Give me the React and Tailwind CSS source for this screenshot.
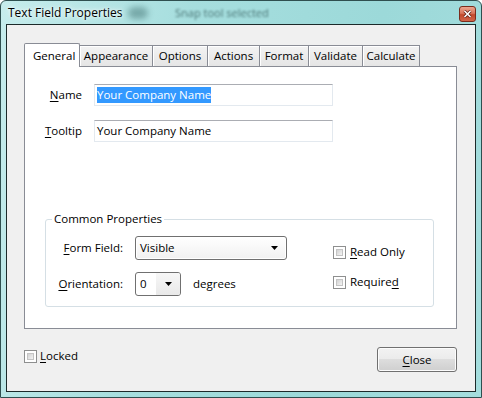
import React from "react";

const Key = ({ children }) => (
  <span className="underline underline-offset-[2px] decoration-1">{children}</span>
);

const CheckBox = () => (
  <span className="w-[13px] h-[13px] border border-[#8e8f8f] bg-white p-[2px] shrink-0 flex">
    <span className="flex-1 border border-[#c4c4c4] bg-[linear-gradient(135deg,#d2d2d2,#f4f4f4)]" />
  </span>
);

const Arrow = () => (
  <svg width="7" height="4" viewBox="0 0 7 4" className="shrink-0">
    <path d="M0 0h7L3.5 4z" fill="#000" />
  </svg>
);

const tabs = [
  { label: "Appearance", w: "w-[73px]" },
  { label: "Options", w: "w-[55px]" },
  { label: "Actions", w: "w-[52px]" },
  { label: "Format", w: "w-[49px]" },
  { label: "Validate", w: "w-[54px]" },
  { label: "Calculate", w: "w-[57px]" },
];

export default function App() {
  return (
    <div className="w-[482px] h-[398px] flex flex-col border border-[#2f4f4f] rounded-t-[6px] overflow-hidden bg-[linear-gradient(100deg,#c6ecec_0%,#a6dede_35%,#9cd9d9_70%,#a4dddd_100%)] font-['Open_Sans',sans-serif] text-[11.5px] text-black">
      {/* title bar */}
      <div className="h-[23px] flex items-center pl-[7px] pr-[5px] relative">
        <span className="text-[12px] [text-shadow:0_0_6px_#fff,0_0_3px_#fff]">Text Field Properties</span>
        <span className="absolute left-[127px] top-[6px] w-[20px] h-[12px] rounded-full bg-[#3f7070] opacity-50 blur-[3px]" />
        <span className="absolute left-[174px] top-[4px] text-[11px] text-[#244848] opacity-70 blur-[1.2px]">Snap tool selected</span>
        <div className="ml-auto mt-[5px] self-start w-[17px] h-[16px] rounded-[3px] border border-[#7a2c1c] bg-[linear-gradient(180deg,#eba68f_0%,#d9765c_45%,#c24a2c_55%,#d2654a_100%)] flex items-center justify-center">
          <svg width="9" height="8" viewBox="0 0 9 8">
            <path d="M1.5 1l6 6M7.5 1l-6 6" stroke="#5a1a10" strokeWidth="3" />
            <path d="M1.5 1l6 6M7.5 1l-6 6" stroke="#fff" strokeWidth="1.6" />
          </svg>
        </div>
      </div>

      {/* client area */}
      <div className="flex-1 mx-[5px] mb-[5px] border border-[#1c2a2a] bg-[#f0f0f0] flex flex-col pt-[18px] pl-[17px]">
        {/* tabs */}
        <div className="flex items-end h-[23px] relative z-10">
          <div className="w-[56px] h-[24px] -mb-px bg-white border border-b-0 border-[#898c95] rounded-t-[2px] pl-[8px] pt-[3px]">
            General
          </div>
          {tabs.map((t) => (
            <div
              key={t.label}
              className={`${t.w} h-[21px] border-t border-r border-[#898c95] bg-[linear-gradient(180deg,#f3f3f3,#e5e5e5)] shadow-[inset_1px_1px_0_#fff] flex items-center justify-center`}
            >
              {t.label}
            </div>
          ))}
        </div>

        {/* panel */}
        <div className="w-[433px] h-[263px] border border-[#898c95] bg-white flex flex-col pt-[17px]">
          <div className="flex flex-col gap-[14px]">
            <div className="flex items-center">
              <span className="w-[57px] text-right">
                <Key>N</Key>ame
              </span>
              <div className="ml-[12px] w-[239px] h-[22px] border border-[#e3e9ef] border-t-[#abadb3] bg-white flex items-center pl-[2px]">
                <span className="bg-[#3399ff] text-white leading-[16px]">Your Company Name</span>
              </div>
            </div>
            <div className="flex items-center">
              <span className="w-[57px] text-right">
                <Key>T</Key>ooltip
              </span>
              <div className="ml-[12px] w-[239px] h-[22px] border border-[#e3e9ef] border-t-[#abadb3] bg-white flex items-center pl-[2px]">
                Your Company Name
              </div>
            </div>
          </div>

          {/* group box */}
          <div className="relative ml-[20px] mt-[77px] w-[389px] h-[88px] border border-[#d5dfe5] rounded-[3px] flex">
            <span className="absolute left-[6px] -top-[10px] bg-white px-[2px] leading-[18px]">Common Properties</span>
            <div className="w-[241px] flex flex-col pt-[16px] gap-[12px]">
              <div className="flex items-center">
                <span className="w-[77px] text-right">
                  <Key>F</Key>orm Field:
                </span>
                <div className="ml-[12px] w-[152px] h-[24px] rounded-[3px] border border-[#707070] bg-[linear-gradient(180deg,#ffffff,#f1f1f1)] shadow-[inset_0_0_0_1px_#fff] flex items-center pl-[4px] pr-[8px]">
                  <span className="flex-1">Visible</span>
                  <Arrow />
                </div>
              </div>
              <div className="flex items-center">
                <span className="w-[77px] text-right">
                  <Key>O</Key>rientation:
                </span>
                <div className="ml-[12px] w-[46px] h-[24px] rounded-[3px] border border-[#707070] bg-white flex items-center">
                  <span className="w-[20px] pl-[4px] h-full flex items-center">0</span>
                  <span className="flex-1 h-full bg-[linear-gradient(180deg,#f7f7f7,#e9e9e9)] flex items-center justify-center rounded-r-[2px]">
                    <Arrow />
                  </span>
                </div>
                <span className="ml-[12px]">degrees</span>
              </div>
            </div>
            <div className="ml-[46px] flex flex-col pt-[25px] gap-[16px]">
              <label className="flex items-center gap-[4px] leading-[14px]">
                <CheckBox />
                <span>
                  <Key>R</Key>ead Only
                </span>
              </label>
              <label className="flex items-center gap-[4px] leading-[14px]">
                <CheckBox />
                <span>
                  Require<Key>d</Key>
                </span>
              </label>
            </div>
          </div>
        </div>

        {/* bottom row */}
        <div className="w-[433px] flex items-start mt-[18px]">
          <label className="mt-[2px] flex items-center gap-[3px] leading-[14px]">
            <CheckBox />
            <span>
              <Key>L</Key>ocked
            </span>
          </label>
          <button className="ml-auto w-[80px] h-[25px] rounded-[3px] border border-[#707070] shadow-[inset_0_0_0_1px_#fcfcfc] bg-[linear-gradient(180deg,#f2f2f2_0%,#ebebeb_50%,#dddddd_50%,#cfcfcf_100%)] flex items-center justify-center">
            <span>
              <Key>C</Key>lose
            </span>
          </button>
        </div>
      </div>
    </div>
  );
}
